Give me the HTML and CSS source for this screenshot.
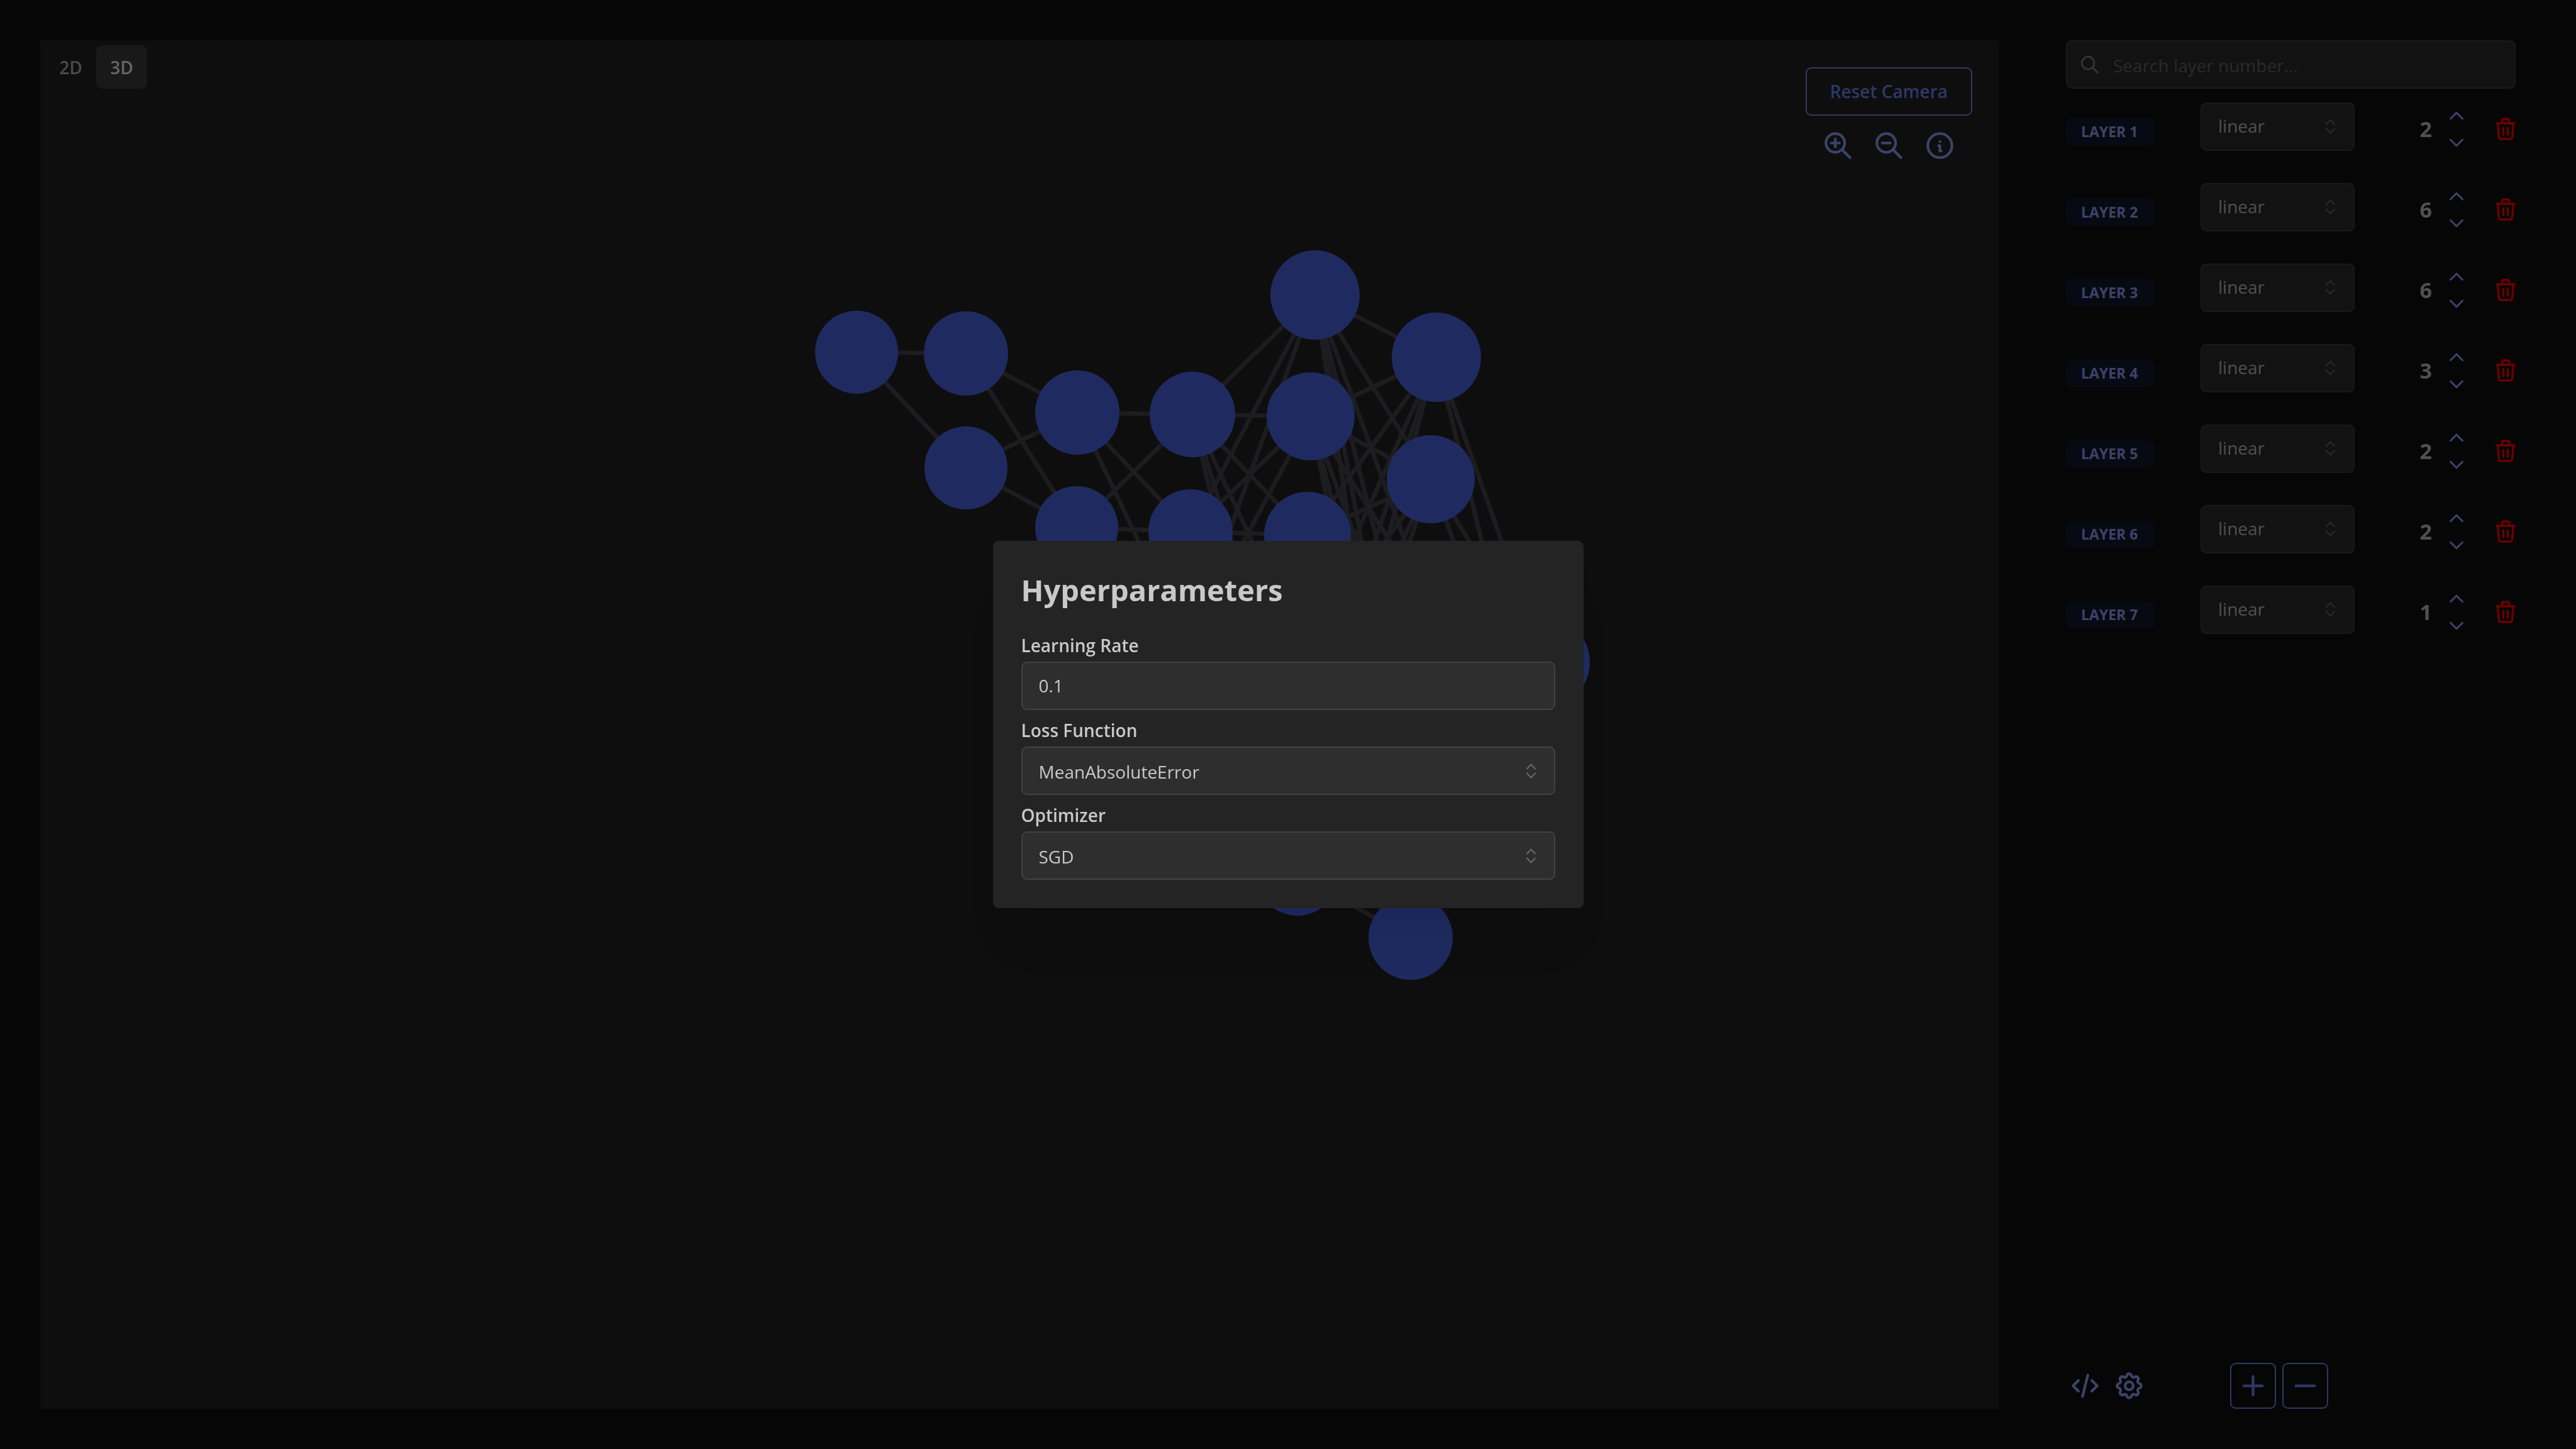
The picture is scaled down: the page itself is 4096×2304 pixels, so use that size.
FILE: index.html
```html
<!DOCTYPE html>
<html lang="en">
<head>
<meta charset="utf-8">
<title>Neural Network Builder</title>
<link rel="stylesheet" href="styles.css">
</head>
<body>
<svg class="sprite" aria-hidden="true">
  <symbol id="zoom-in" viewBox="0 0 24 24"><circle cx="10" cy="10" r="7"/><path d="M7 10h6M10 7v6M21 21l-6-6"/></symbol>
  <symbol id="zoom-out" viewBox="0 0 24 24"><circle cx="10" cy="10" r="7"/><path d="M7 10h6M21 21l-6-6"/></symbol>
  <symbol id="info" viewBox="0 0 24 24"><circle cx="12" cy="12" r="9"/><path d="M12 9h.01M11 12h1v4h1"/></symbol>
  <symbol id="search" viewBox="0 0 24 24"><circle cx="10" cy="10" r="7"/><path d="M21 21l-6-6"/></symbol>
  <symbol id="up" viewBox="0 0 24 24"><path d="M6 15l6-6 6 6"/></symbol>
  <symbol id="down" viewBox="0 0 24 24"><path d="M6 9l6 6 6-6"/></symbol>
  <symbol id="trash" viewBox="3 2 18 20"><path d="M4 7h16M10 11v6M14 11v6M5 7l1 12a2 2 0 0 0 2 2h8a2 2 0 0 0 2-2l1-12M9 7V4a1 1 0 0 1 1-1h4a1 1 0 0 1 1 1v3"/></symbol>
  <symbol id="code" viewBox="0 0 24 24"><path d="M7 8l-4 4 4 4M17 8l4 4-4 4M14 4l-4 16"/></symbol>
  <symbol id="gear" viewBox="0 0 24 24"><path d="M10.325 4.317c.426-1.756 2.924-1.756 3.35 0a1.724 1.724 0 0 0 2.573 1.066c1.543-.94 3.31.826 2.37 2.37a1.724 1.724 0 0 0 1.065 2.572c1.756.426 1.756 2.924 0 3.35a1.724 1.724 0 0 0-1.066 2.573c.94 1.543-.826 3.31-2.37 2.37a1.724 1.724 0 0 0-2.572 1.065c-.426 1.756-2.924 1.756-3.35 0a1.724 1.724 0 0 0-2.573-1.066c-1.543.94-3.31-.826-2.37-2.37a1.724 1.724 0 0 0-1.065-2.572c-1.756-.426-1.756-2.924 0-3.35a1.724 1.724 0 0 0 1.066-2.573c-.94-1.543.826-3.31 2.37-2.37 1 .608 2.296.07 2.572-1.065z"/><circle cx="12" cy="12" r="3"/></symbol>
  <symbol id="plus" viewBox="0 0 24 24"><path d="M12 5v14M5 12h14"/></symbol>
  <symbol id="minus" viewBox="0 0 24 24"><path d="M5 12h14"/></symbol>
  <symbol id="selector" viewBox="0 0 15 24"><path d="M1 8.500l6.500-7 6.500 7M1 15.500l6.500 7 6.500-7"/></symbol>
</svg>

<main class="app">
  <section class="viewer">
    <svg class="graph" viewBox="64 64 3115 2176" preserveAspectRatio="xMidYMin meet" role="img" aria-label="Network graph">
      <g id="edges" class="edges"></g>
      <g id="nodes" class="nodes"></g>
    </svg>
    <div class="toolbar">
      <div class="tabs">
        <button class="tab">2D</button>
        <button class="tab tab-active">3D</button>
      </div>
      <div class="camera">
        <button class="outline-button reset">Reset Camera</button>
        <div class="camera-icons">
          <button class="icon-button" aria-label="Zoom in"><svg class="icon"><use href="#zoom-in"/></svg></button>
          <button class="icon-button" aria-label="Zoom out"><svg class="icon"><use href="#zoom-out"/></svg></button>
          <button class="icon-button" aria-label="Info"><svg class="icon"><use href="#info"/></svg></button>
        </div>
      </div>
    </div>
  </section>

  <aside class="sidebar">
    <label class="search">
      <svg class="icon search-icon"><use href="#search"/></svg>
      <input class="search-input" type="text" placeholder="Search layer number..." aria-label="Search layer number">
    </label>
    <ul class="layers">
      <li class="layer">
        <span class="badge">Layer 1</span>
        <div class="select-wrap layer-select"><select class="control" aria-label="Layer 1 activation"><option>linear</option></select><svg class="icon selector-icon"><use href="#selector"/></svg></div>
        <div class="layer-actions">
          <span class="count">2</span>
          <div class="stepper"><button class="step" aria-label="Add node"><svg class="icon step-icon"><use href="#up"/></svg></button><button class="step" aria-label="Remove node"><svg class="icon step-icon"><use href="#down"/></svg></button></div>
          <button class="delete" aria-label="Delete layer 1"><svg class="icon trash-icon"><use href="#trash"/></svg></button>
        </div>
      </li>
      <li class="layer">
        <span class="badge">Layer 2</span>
        <div class="select-wrap layer-select"><select class="control" aria-label="Layer 2 activation"><option>linear</option></select><svg class="icon selector-icon"><use href="#selector"/></svg></div>
        <div class="layer-actions">
          <span class="count">6</span>
          <div class="stepper"><button class="step" aria-label="Add node"><svg class="icon step-icon"><use href="#up"/></svg></button><button class="step" aria-label="Remove node"><svg class="icon step-icon"><use href="#down"/></svg></button></div>
          <button class="delete" aria-label="Delete layer 2"><svg class="icon trash-icon"><use href="#trash"/></svg></button>
        </div>
      </li>
      <li class="layer">
        <span class="badge">Layer 3</span>
        <div class="select-wrap layer-select"><select class="control" aria-label="Layer 3 activation"><option>linear</option></select><svg class="icon selector-icon"><use href="#selector"/></svg></div>
        <div class="layer-actions">
          <span class="count">6</span>
          <div class="stepper"><button class="step" aria-label="Add node"><svg class="icon step-icon"><use href="#up"/></svg></button><button class="step" aria-label="Remove node"><svg class="icon step-icon"><use href="#down"/></svg></button></div>
          <button class="delete" aria-label="Delete layer 3"><svg class="icon trash-icon"><use href="#trash"/></svg></button>
        </div>
      </li>
      <li class="layer">
        <span class="badge">Layer 4</span>
        <div class="select-wrap layer-select"><select class="control" aria-label="Layer 4 activation"><option>linear</option></select><svg class="icon selector-icon"><use href="#selector"/></svg></div>
        <div class="layer-actions">
          <span class="count">3</span>
          <div class="stepper"><button class="step" aria-label="Add node"><svg class="icon step-icon"><use href="#up"/></svg></button><button class="step" aria-label="Remove node"><svg class="icon step-icon"><use href="#down"/></svg></button></div>
          <button class="delete" aria-label="Delete layer 4"><svg class="icon trash-icon"><use href="#trash"/></svg></button>
        </div>
      </li>
      <li class="layer">
        <span class="badge">Layer 5</span>
        <div class="select-wrap layer-select"><select class="control" aria-label="Layer 5 activation"><option>linear</option></select><svg class="icon selector-icon"><use href="#selector"/></svg></div>
        <div class="layer-actions">
          <span class="count">2</span>
          <div class="stepper"><button class="step" aria-label="Add node"><svg class="icon step-icon"><use href="#up"/></svg></button><button class="step" aria-label="Remove node"><svg class="icon step-icon"><use href="#down"/></svg></button></div>
          <button class="delete" aria-label="Delete layer 5"><svg class="icon trash-icon"><use href="#trash"/></svg></button>
        </div>
      </li>
      <li class="layer">
        <span class="badge">Layer 6</span>
        <div class="select-wrap layer-select"><select class="control" aria-label="Layer 6 activation"><option>linear</option></select><svg class="icon selector-icon"><use href="#selector"/></svg></div>
        <div class="layer-actions">
          <span class="count">2</span>
          <div class="stepper"><button class="step" aria-label="Add node"><svg class="icon step-icon"><use href="#up"/></svg></button><button class="step" aria-label="Remove node"><svg class="icon step-icon"><use href="#down"/></svg></button></div>
          <button class="delete" aria-label="Delete layer 6"><svg class="icon trash-icon"><use href="#trash"/></svg></button>
        </div>
      </li>
      <li class="layer">
        <span class="badge">Layer 7</span>
        <div class="select-wrap layer-select"><select class="control" aria-label="Layer 7 activation"><option>linear</option></select><svg class="icon selector-icon"><use href="#selector"/></svg></div>
        <div class="layer-actions">
          <span class="count">1</span>
          <div class="stepper"><button class="step" aria-label="Add node"><svg class="icon step-icon"><use href="#up"/></svg></button><button class="step" aria-label="Remove node"><svg class="icon step-icon"><use href="#down"/></svg></button></div>
          <button class="delete" aria-label="Delete layer 7"><svg class="icon trash-icon"><use href="#trash"/></svg></button>
        </div>
      </li>
    </ul>
    <footer class="actions">
      <div class="action-group">
        <button class="icon-button" aria-label="Show code"><svg class="icon"><use href="#code"/></svg></button>
        <button class="icon-button" aria-label="Hyperparameters"><svg class="icon"><use href="#gear"/></svg></button>
      </div>
      <div class="action-group">
        <button class="outline-button square" aria-label="Add layer"><svg class="icon"><use href="#plus"/></svg></button>
        <button class="outline-button square" aria-label="Remove layer"><svg class="icon"><use href="#minus"/></svg></button>
      </div>
    </footer>
  </aside>
</main>

<div class="overlay">
  <form class="modal" role="dialog" aria-labelledby="modal-title">
    <h2 class="modal-title" id="modal-title">Hyperparameters</h2>
    <div class="fields">
      <div class="field">
        <label class="field-label" for="rate">Learning Rate</label>
        <input class="control" id="rate" type="text" value="0.1">
      </div>
      <div class="field">
        <label class="field-label" for="loss">Loss Function</label>
        <div class="select-wrap"><select class="control" id="loss"><option>MeanAbsoluteError</option></select><svg class="icon selector-icon"><use href="#selector"/></svg></div>
      </div>
      <div class="field">
        <label class="field-label" for="optimizer">Optimizer</label>
        <div class="select-wrap"><select class="control" id="optimizer"><option>SGD</option></select><svg class="icon selector-icon"><use href="#selector"/></svg></div>
      </div>
    </div>
  </form>
</div>
<script src="graph.js"></script>
</body>
</html>
```

FILE: graph.js
```js
// Each layer is a list of projected nodes: [x, y, radius].
const layers = [
  [[2456, 1053, 72], [2448, 1234, 70]],
  [[2284, 568, 71], [2275, 762, 70], [2267, 950, 69], [2259, 1134, 68], [2251, 1315, 67], [2243, 1491, 67]],
  [[2091, 469, 71], [2084, 662, 70], [2079, 851, 69], [2073, 1035, 67], [2068, 1215, 66], [2063, 1391, 65]],
  [[1896, 659, 68], [1893, 845, 67], [1889, 1026, 66]],
  [[1713, 656, 67], [1712, 839, 66]],
  [[1536, 562, 67], [1536, 744, 66]],
  [[1362, 560, 66]]
];

const ns = "http://www.w3.org/2000/svg";

function add(parent, tag, attributes) {
  const element = document.createElementNS(ns, tag);
  for (const name in attributes) element.setAttribute(name, attributes[name]);
  parent.appendChild(element);
}

const edges = document.getElementById("edges");
const nodes = document.getElementById("nodes");

layers.forEach((layer, index) => {
  for (const [x, y, r] of layer) {
    add(nodes, "circle", { cx: x, cy: y, r });
    for (const [x2, y2] of layers[index + 1] || []) {
      add(edges, "line", { x1: x, y1: y, x2, y2 });
    }
  }
});
```

FILE: styles.css
```css
* {
  box-sizing: border-box;
}

body {
  margin: 0;
  background: #060606;
  font-family: "Open Sans", "Noto Sans", sans-serif;
  font-size: 28px;
  color: #505050;
}

button,
input,
select {
  margin: 0;
  padding: 0;
  border: 0;
  background: none;
  color: inherit;
  font: inherit;
}

.sprite {
  position: absolute;
  width: 0;
  height: 0;
}

.icon {
  display: block;
  width: 51px;
  height: 51px;
  fill: none;
  stroke: currentColor;
  stroke-width: 2;
  stroke-linecap: round;
  stroke-linejoin: round;
}

.app {
  display: grid;
  grid-template-columns: minmax(0, 3115fr) minmax(0, 715fr);
  gap: 106px;
  min-height: 100vh;
  padding: 64px 96px 64px 64px;
}

/* Viewer */

.viewer {
  display: grid;
  background: #0e0e0e;
}

.graph,
.toolbar {
  grid-area: 1 / 1;
}

.graph {
  width: 100%;
}

.edges {
  stroke: #1d1d20;
  stroke-width: 7;
}

.nodes {
  fill: #1f2b60;
}

.toolbar {
  display: flex;
  justify-content: space-between;
  align-items: flex-start;
}

.tabs {
  display: flex;
  padding: 8px;
}

.tab {
  width: 81px;
  height: 69px;
  border-radius: 9px;
  color: #4b4b4b;
  font-weight: 600;
}

.tab-active {
  background: #191919;
  color: #666666;
}

.camera {
  display: flex;
  flex-direction: column;
  align-items: center;
  gap: 17px;
  padding: 43px;
}

.camera-icons {
  display: flex;
  gap: 21px;
}

.outline-button {
  display: grid;
  place-items: center;
  border: 2px solid #2d3966;
  border-radius: 9px;
  color: #2d3966;
}

.reset {
  height: 77px;
  padding: 0 37px 2px;
  font-weight: 600;
}

.icon-button {
  display: grid;
  place-items: center;
  width: 60px;
  height: 60px;
  color: #3c4367;
}

/* Sidebar */

.sidebar {
  display: flex;
  flex-direction: column;
}

.search {
  display: flex;
  align-items: center;
  gap: 20px;
  height: 77px;
  padding: 0 19px;
  border: 2px solid #1a1a1a;
  border-radius: 9px;
  background: #121212;
}

.search-icon {
  width: 34px;
  height: 34px;
  color: #343434;
}

.search-input {
  flex: 1;
  min-width: 0;
  padding-top: 2px;
}

.search-input::placeholder {
  color: #2a2a2a;
  opacity: 1;
}

.layers {
  margin: 0;
  padding: 0;
  list-style: none;
}

.layer {
  display: grid;
  grid-template-columns: 214fr 245fr 256fr;
  align-items: center;
  height: 128px;
}

.badge {
  justify-self: start;
  min-width: 141px;
  margin-top: 8px;
  padding: 0 24px;
  border-radius: 9px;
  background: #080a13;
  color: #3c4367;
  font-size: 23px;
  font-weight: 700;
  line-height: 43px;
  text-transform: uppercase;
}

.select-wrap {
  display: grid;
  align-items: center;
}

.layer-select {
  margin-bottom: 8px;
}

.control {
  grid-area: 1 / 1;
  width: 100%;
  height: 77px;
  padding: 0 26px 2px;
  border: 2px solid #1a1a1a;
  border-radius: 9px;
  background: #121212;
  appearance: none;
}

.selector-icon {
  grid-area: 1 / 1;
  justify-self: end;
  width: 15px;
  height: 24px;
  margin-right: 31px;
  color: #2b2b2b;
  pointer-events: none;
}

.layer-actions {
  display: flex;
  justify-content: flex-end;
  align-items: center;
}

.count {
  margin-right: 20px;
  font-size: 34px;
  font-weight: 700;
}

.stepper {
  display: grid;
  gap: 5px;
  margin-right: 43px;
  color: #3c4367;
}

.step-icon {
  width: 38px;
  height: 38px;
}

.delete {
  color: #690000;
}

.trash-icon {
  width: 32px;
  height: 36px;
}

.actions {
  display: flex;
  align-items: center;
  gap: 131px;
  margin-top: auto;
}

.action-group {
  display: flex;
  gap: 10px;
}

.square {
  width: 73px;
  height: 73px;
}

/* Modal */

.overlay {
  position: fixed;
  inset: 0;
  display: grid;
  place-items: center;
}

.modal {
  width: 939px;
  padding: 45px;
  border-radius: 9px;
  background: #242424;
  box-shadow: 0 77px 60px -15px rgba(0, 0, 0, 0.05), 0 36px 36px -15px rgba(0, 0, 0, 0.04);
  color: #c9c9c9;
}

.modal-title {
  margin: 0 0 35px;
  font-size: 47px;
  font-weight: 700;
  line-height: 66px;
}

.fields {
  display: grid;
  gap: 12px;
}

.field-label {
  display: block;
  margin-bottom: 6px;
  font-weight: 600;
  line-height: 40px;
}

.modal .control {
  display: block;
  border-color: #424242;
  background: #2e2e2e;
}

.modal select.control {
  padding-top: 4px;
}

.modal .selector-icon {
  color: #696969;
}
```
